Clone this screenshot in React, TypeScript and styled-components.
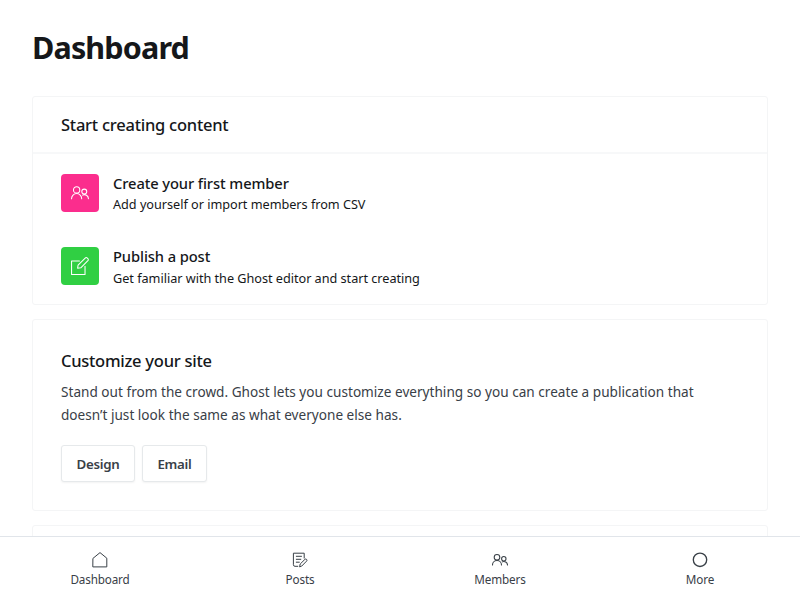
import React from 'react';
import styled, { createGlobalStyle } from 'styled-components';

const GlobalStyle = createGlobalStyle`
  *, *::before, *::after { box-sizing: border-box; }
  body {
    margin: 0;
    background: #fff;
    color: #15171a;
    font-family: "Noto Sans", "Open Sans", sans-serif;
    overflow: hidden;
  }
  h1, h2, h3, p { margin: 0; }
`;

const Shell = styled.div`
  display: flex;
  flex-direction: column;
  height: 600px;
`;

const Main = styled.main`
  flex: 1;
  min-height: 0;
  overflow: hidden;
  padding: 24px 32px 0;
`;

const Title = styled.h1`
  height: 72px;
  font-size: 30.5px;
  line-height: 46px;
  font-weight: 700;
  letter-spacing: -0.85px;
`;

const Card = styled.section`
  border: 1px solid #f4f5f6;
  border-radius: 3px;
  margin-bottom: 14px;
`;

const CardHeader = styled.header`
  height: 57px;
  padding: 0 28px;
  border-bottom: 2px solid #f7f8f9;
`;

const Heading = styled.h2<{ $tracking: number }>`
  font-size: 16.5px;
  line-height: 56px;
  font-weight: 500;
  white-space: nowrap;
  letter-spacing: ${(p) => p.$tracking}px;
`;

const StepList = styled.div`
  display: flex;
  flex-direction: column;
  gap: 35px;
  height: 150px;
  padding: 20px 28px 0;
`;

const Step = styled.div`
  display: flex;
  gap: 14px;
  height: 38px;
`;

const StepIcon = styled.div<{ $color: string }>`
  display: flex;
  align-items: center;
  justify-content: center;
  width: 38px;
  height: 38px;
  border-radius: 4px;
  background: ${(p) => p.$color};
  color: #fff;
`;

const StepText = styled.div`
  display: flex;
  flex-direction: column;
  white-space: nowrap;
`;

const StepTitle = styled.h3`
  font-size: 14.7px;
  line-height: 18px;
  font-weight: 500;
  letter-spacing: -0.09px;
`;

const StepDescription = styled.p<{ $leading: number }>`
  font-size: 12.7px;
  line-height: ${(p) => p.$leading}px;
  font-weight: 400;
  letter-spacing: -0.03px;
`;

const CustomizeBody = styled.div`
  height: 190px;
  padding: 13px 28px 0;
`;

const Paragraph = styled.p`
  margin-top: -9px;
  font-size: 13.6px;
  line-height: 23px;
  letter-spacing: 0.01px;
  color: #394047;
  white-space: nowrap;
`;

const ButtonRow = styled.div`
  display: flex;
  gap: 7px;
  margin-top: 19px;
`;

const Button = styled.button<{ $width: number }>`
  width: ${(p) => p.$width}px;
  height: 37px;
  padding: 0;
  border: 1px solid #e6e9eb;
  border-radius: 3px;
  background: #fff;
  box-shadow: 0 1px 2px rgba(0, 0, 0, 0.05);
  color: #394047;
  font: 600 13.3px/34px "Noto Sans", "Open Sans", sans-serif;
  letter-spacing: -0.25px;
`;

const NextCard = styled.section`
  height: 60px;
  border: 1px solid #f4f5f6;
  border-radius: 3px;
`;

const NavBar = styled.nav`
  display: grid;
  grid-template-columns: repeat(4, 1fr);
  height: 64px;
  border-top: 1px solid #e1e5ea;
  background: #fff;
`;

const NavItem = styled.a`
  display: flex;
  flex-direction: column;
  align-items: center;
  padding-top: 15px;
  color: #394047;
  font-size: 11.7px;
  line-height: 16px;
  letter-spacing: -0.15px;
  svg { margin-bottom: 3px; }
`;

const Icon = styled.svg`
  display: block;
  flex: none;
  fill: none;
  stroke: currentColor;
  stroke-linecap: round;
  stroke-linejoin: round;
`;

const MembersIcon = ({ size, weight }: { size: number; weight: number }) => (
  <Icon width={size} height={size} viewBox="0 0 24 24" strokeWidth={weight}>
    <circle cx="7.5" cy="7.9" r="4.2" />
    <path d="M.75 19.5a6.75 6.75 0 0 1 13.5 0" />
    <circle cx="17.7" cy="10.1" r="3.3" />
    <path d="M15.4 14.8a5.4 5.4 0 0 1 7.85 4.7" />
  </Icon>
);

const ComposeIcon = () => (
  <Icon width={18} height={18} viewBox="0 0 24 24" strokeWidth={1.4}>
    <path d="m13.05 14.4-4.25.65.65-4.25L18.9 1.35a2 2 0 0 1 2.85 0l.75.75a2 2 0 0 1 0 2.85z" />
    <path d="M18.7 12.5v10.75H.75V5.2h10.5" />
  </Icon>
);

const HomeIcon = () => (
  <Icon width={16} height={16} viewBox="0 0 16 16" strokeWidth={1}>
    <path d="M1.2 6.2 8 .6l6.8 5.6v8.7H1.2z" />
  </Icon>
);

const PostsIcon = () => (
  <Icon width={16} height={16} viewBox="0 0 16 16" strokeWidth={1}>
    <path d="M5.8 14.3H3a1.6 1.6 0 0 1-1.6-1.6V1.2h10.8v4.9M4.3 4.3h5.2M4.3 7.3h4.5M4.3 10.2h3" />
    <path d="m7.7 14.5.5-2.5 4.7-4.6a1.15 1.15 0 0 1 1.7 1.7L10 13.8z" />
  </Icon>
);

const MoreIcon = () => (
  <Icon width={16} height={16} viewBox="0 0 16 16" strokeWidth={1.35}>
    <circle cx="8" cy="7.8" r="6.7" />
  </Icon>
);

export default function App() {
  return (
    <Shell>
      <GlobalStyle />
      <Main>
        <Title>Dashboard</Title>
        <Card>
          <CardHeader>
            <Heading $tracking={-0.24}>Start creating content</Heading>
          </CardHeader>
          <StepList>
            <Step>
              <StepIcon $color="#fb2d8d"><MembersIcon size={18} weight={1.4} /></StepIcon>
              <StepText>
                <StepTitle>Create your first member</StepTitle>
                <StepDescription $leading={24}>Add yourself or import members from CSV</StepDescription>
              </StepText>
            </Step>
            <Step>
              <StepIcon $color="#30cf43"><ComposeIcon /></StepIcon>
              <StepText>
                <StepTitle>Publish a post</StepTitle>
                <StepDescription $leading={26}>Get familiar with the Ghost editor and start creating</StepDescription>
              </StepText>
            </Step>
          </StepList>
        </Card>
        <Card>
          <CustomizeBody>
            <Heading $tracking={-0.26}>Customize your site</Heading>
            <Paragraph>
              Stand out from the crowd. Ghost lets you customize everything so you can create a publication that
              <br />
              doesn’t just look the same as what everyone else has.
            </Paragraph>
            <ButtonRow>
              <Button $width={74}>Design</Button>
              <Button $width={65}>Email</Button>
            </ButtonRow>
          </CustomizeBody>
        </Card>
        <NextCard />
      </Main>
      <NavBar>
        <NavItem><HomeIcon />Dashboard</NavItem>
        <NavItem><PostsIcon />Posts</NavItem>
        <NavItem><MembersIcon size={16} weight={1.6} />Members</NavItem>
        <NavItem><MoreIcon />More</NavItem>
      </NavBar>
    </Shell>
  );
}
